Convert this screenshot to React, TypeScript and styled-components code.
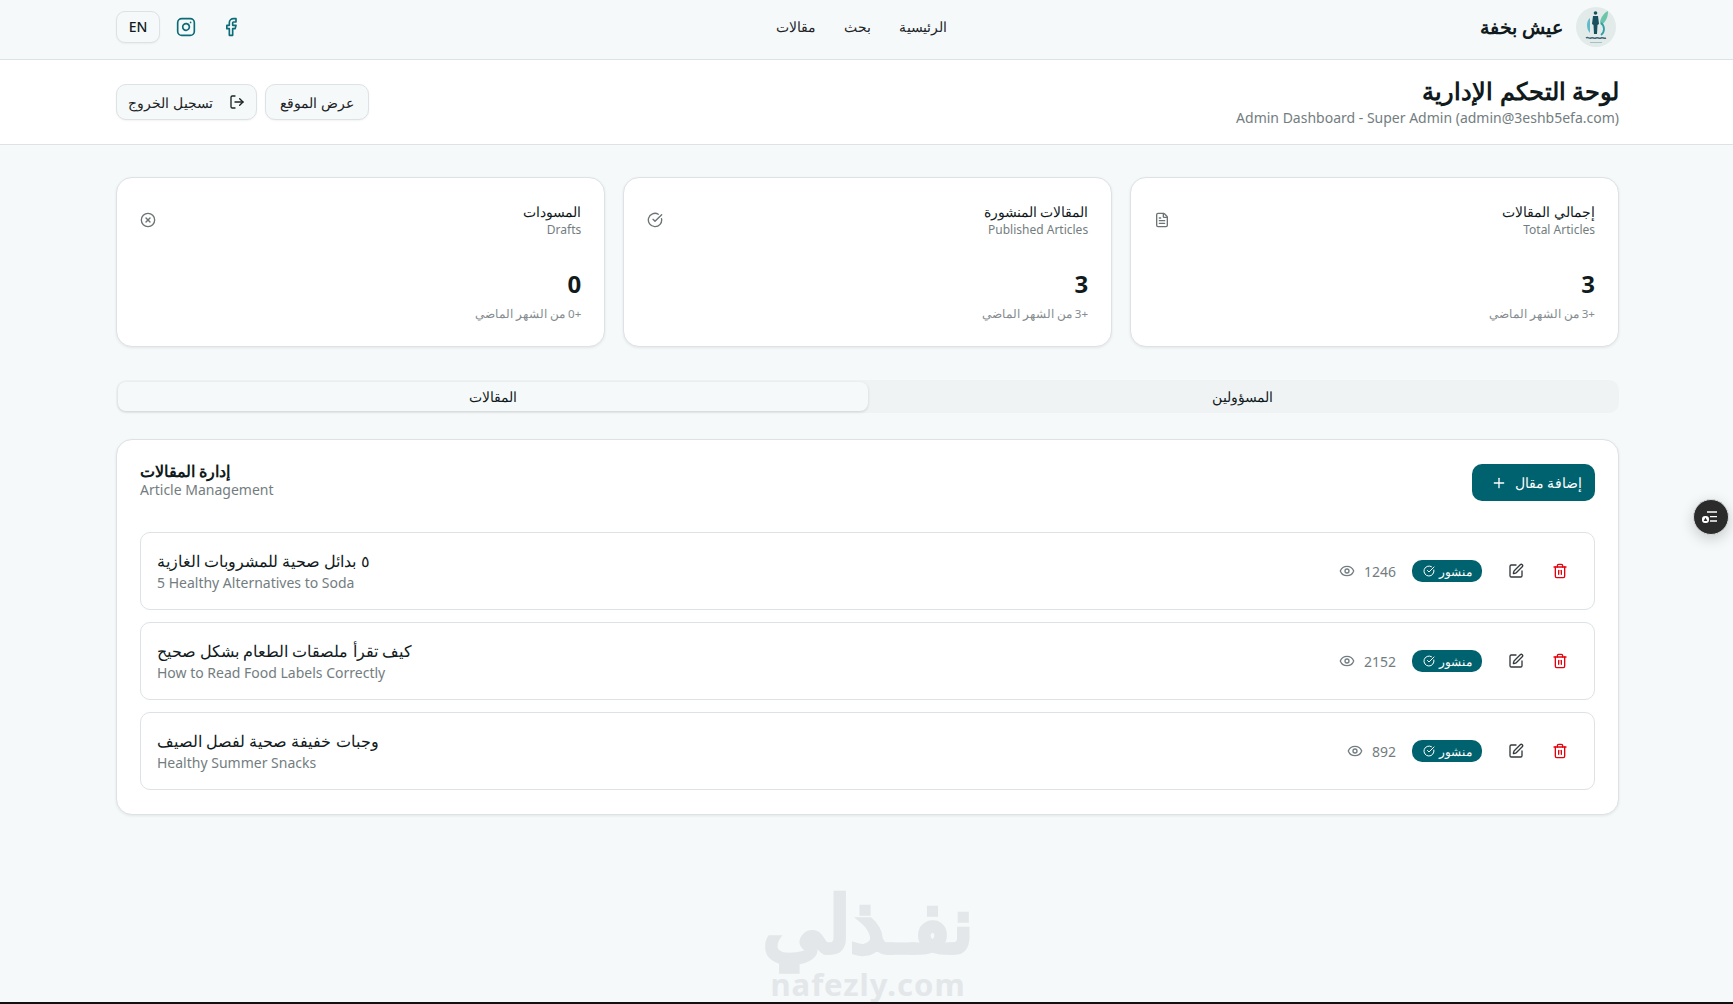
import React from 'react'
import styled, { createGlobalStyle } from 'styled-components'
import { CircleCheckBig, CircleX, Eye, Facebook, FileText, Instagram, LogOut, Plus, SquarePen, Trash2 } from 'lucide-react'

const teal = '#00626e'
const muted = '#737d80'
const ink = '#111a1c'
const line = '#dde2e5'
const pageBg = '#f5f9fa'

const GlobalStyle = createGlobalStyle`
    html, body {
        margin: 0;
        padding: 0;
        height: 1004px;
        overflow: hidden;
        background: ${pageBg};
        color: ${ink};
        font-family: "Noto Sans", sans-serif;
    }
    * { box-sizing: border-box; }
`

const stats = [
    { title: 'إجمالي المقالات', sub: 'Total Articles', value: '3', delta: '+3 من الشهر الماضي', Icon: FileText },
    { title: 'المقالات المنشورة', sub: 'Published Articles', value: '3', delta: '+3 من الشهر الماضي', Icon: CircleCheckBig },
    { title: 'المسودات', sub: 'Drafts', value: '0', delta: '+0 من الشهر الماضي', Icon: CircleX },
]

const articles = [
    { title: '٥ بدائل صحية للمشروبات الغازية', sub: '5 Healthy Alternatives to Soda', views: 1246 },
    { title: 'كيف تقرأ ملصقات الطعام بشكل صحيح', sub: 'How to Read Food Labels Correctly', views: 2152 },
    { title: 'وجبات خفيفة صحية لفصل الصيف', sub: 'Healthy Summer Snacks', views: 892 },
]

const App = () => {
    return (
        <Page dir="rtl">
            <GlobalStyle />
            <NavBar>
                <NavInner>
                    <Brand>
                        <LogoBadge>
                            <svg width="40" height="40" viewBox="0 0 40 40" fill="none">
                                <path d="M24 15c1-5 4-9 8-11 0 6-2 11-7 14z" fill="#6cc4ab" />
                                <path d="M14 11c-4 3-4 11 0 15z" fill="#5dbcc8" />
                                <path d="M25 16c4 3 4 9 0 12" stroke="#2f9ea6" strokeWidth="1.8" />
                                <circle cx="19.5" cy="6" r="1.8" fill="#17505e" />
                                <path d="M17 9h5l1 8-1.500 1-.5 9h-3l-.5-9L16 17z" fill="#17505e" />
                                <path d="M10 31c2-1.500 3 1 5 0s3 1 5 0 3 1 5 0 3 1 5 0" stroke="#3d6670" strokeWidth="1.500" />
                                <path d="M14 35.500h12" stroke="#a9c0c2" strokeWidth="1" />
                            </svg>
                        </LogoBadge>
                        <BrandName>عيش بخفة</BrandName>
                    </Brand>
                    <NavLinks>
                        <NavLink>الرئيسية</NavLink>
                        <NavLink>بحث</NavLink>
                        <NavLink>مقالات</NavLink>
                    </NavLinks>
                    <NavTools>
                        <SocialLink><Facebook size={20} /></SocialLink>
                        <SocialLink><Instagram size={20} /></SocialLink>
                        <LangButton>EN</LangButton>
                    </NavTools>
                </NavInner>
            </NavBar>

            <DashHeader>
                <DashInner>
                    <div>
                        <DashTitle>لوحة التحكم الإدارية</DashTitle>
                        <DashSub dir="ltr">Admin Dashboard - Super Admin (admin@3eshb5efa.com)</DashSub>
                    </div>
                    <DashActions>
                        <SiteButton>عرض الموقع</SiteButton>
                        <LogoutButton><LogOut size={16} />تسجيل الخروج</LogoutButton>
                    </DashActions>
                </DashInner>
            </DashHeader>

            <Main>
                <StatGrid>
                    {stats.map(({ title, sub, value, delta, Icon }) => (
                        <StatCard key={sub}>
                            <StatTop>
                                <div>
                                    <StatTitle>{title}</StatTitle>
                                    <StatSub>{sub}</StatSub>
                                </div>
                                <Icon size={16} color="#6b7375" />
                            </StatTop>
                            <StatValue>{value}</StatValue>
                            <StatDelta>{delta}</StatDelta>
                        </StatCard>
                    ))}
                </StatGrid>

                <Tabs>
                    <Tab>المسؤولين</Tab>
                    <Tab $active>المقالات</Tab>
                </Tabs>

                <Panel>
                    <PanelHead>
                        <PanelHeading>
                            <PanelTitle>إدارة المقالات</PanelTitle>
                            <PanelSub>Article Management</PanelSub>
                        </PanelHeading>
                        <AddButton>إضافة مقال<Plus size={16} /></AddButton>
                    </PanelHead>
                    <ArticleList>
                        {articles.map(item => (
                            <ArticleRow key={item.sub}>
                                <ArticleText>
                                    <ArticleTitle>{item.title}</ArticleTitle>
                                    <ArticleSub dir="ltr">{item.sub}</ArticleSub>
                                </ArticleText>
                                <ArticleMeta>
                                    <Views dir="ltr"><Eye size={16} />{item.views}</Views>
                                    <StatusBadge>منشور<CircleCheckBig size={12} /></StatusBadge>
                                    <EditButton><SquarePen size={16} /></EditButton>
                                    <DeleteButton><Trash2 size={16} /></DeleteButton>
                                </ArticleMeta>
                            </ArticleRow>
                        ))}
                    </ArticleList>
                </Panel>
            </Main>

            <FloatButton>
                <svg width="34" height="34" viewBox="0 0 34 34" fill="none" stroke="#fff" strokeWidth="1.300">
                    <path d="M13 12h10M16 16.700h7M16 21h7" />
                    <rect x="8" y="16" width="7" height="7" rx="3" fill="#fff" stroke="none" />
                    <path d="M11.500 17.500l1.800 3.500h-3.600z" fill="#2b2b2b" stroke="none" />
                </svg>
            </FloatButton>

            <Watermark dir="rtl">
                <WatermarkName>نفـذلي</WatermarkName>
                <WatermarkUrl dir="ltr">nafezly.com</WatermarkUrl>
            </Watermark>
            <BottomEdge />
        </Page>
    )
}

const Page = styled.div`
    position: relative;
    height: 1004px;
    overflow: hidden;
`

const NavBar = styled.header`
    height: 60px;
    border-bottom: 1px solid ${line};
    background: ${pageBg};
`

const NavInner = styled.div`
    height: 100%;
    padding: 0 114px 6px 116px;
    display: flex;
    align-items: center;
    justify-content: space-between;
`

const Brand = styled.div`
    display: flex;
    align-items: center;
    gap: 13px;
    width: 346px;
`

const LogoBadge = styled.div`
    width: 40px;
    height: 40px;
    margin-right: 3px;
    border-radius: 50%;
    background: #e2eaea;
    display: flex;
    align-items: center;
    justify-content: center;
`

const BrandName = styled.span`
    font-size: 18.700px;
    font-weight: 700;
`

const NavLinks = styled.nav`
    display: flex;
    gap: 28px;
`

const NavLink = styled.a`
    font-size: 14.400px;
    font-weight: 500;
    color: #1d2527;
`

const NavTools = styled.div`
    width: 334px;
    display: flex;
    align-items: center;
    justify-content: flex-end;
    gap: 16px;
`

const SocialLink = styled.a`
    display: flex;
    color: #0b6c78;
    &:first-child {
        margin-left: 9px;
    }
`

const LangButton = styled.button`
    width: 44px;
    height: 32px;
    font: 500 14px "Noto Sans", sans-serif;
    color: ${ink};
    background: ${pageBg};
    border: 1px solid ${line};
    border-radius: 9px;
    box-shadow: 0 1px 2px rgba(0, 0, 0, .05);
`

const DashHeader = styled.section`
    height: 85px;
    background: #fff;
    border-bottom: 1px solid ${line};
`

const DashInner = styled.div`
    height: 100%;
    padding: 0 114px 0 116px;
    display: flex;
    align-items: center;
    justify-content: space-between;
`

const DashTitle = styled.h1`
    margin: -5px 0 0;
    font-size: 24.200px;
    line-height: 36px;
    font-weight: 700;
`

const DashSub = styled.p`
    margin: 0;
    font-size: 14px;
    line-height: 18px;
    color: ${muted};
`

const DashActions = styled.div`
    display: flex;
    gap: 8px;
`

const OutlineButton = styled.button`
    height: 36px;
    display: flex;
    align-items: center;
    font: 500 14px "Noto Sans", sans-serif;
    color: #1b2325;
    background: ${pageBg};
    border: 1px solid ${line};
    border-radius: 10px;
    box-shadow: 0 1px 2px rgba(0, 0, 0, .05);
`

const SiteButton = styled(OutlineButton)`
    padding: 0 14.500px;
`

const LogoutButton = styled(OutlineButton)`
    padding: 0 11px;
    gap: 16px;
`

const Main = styled.main`
    padding: 32px 114px 0 116px;
`

const StatGrid = styled.div`
    display: grid;
    grid-template-columns: repeat(3, 1fr);
    gap: 17.600px;
`

const StatCard = styled.div`
    height: 170px;
    padding: 24px 23px 0;
    background: #fff;
    border: 1px solid ${line};
    border-radius: 16px;
    box-shadow: 0 1px 3px rgba(0, 0, 0, .08);
`

const StatTop = styled.div`
    display: flex;
    align-items: center;
    justify-content: space-between;
`

const StatTitle = styled.div`
    font-size: 14px;
    line-height: 19px;
    font-weight: 500;
`

const StatSub = styled.div`
    margin-top: 1px;
    font-size: 12px;
    line-height: 16px;
    color: ${muted};
`

const StatValue = styled.div`
    margin-top: 30px;
    font-size: 24px;
    line-height: 32px;
    font-weight: 700;
`

const StatDelta = styled.div`
    margin-top: 5px;
    font-size: 11.600px;
    line-height: 18px;
    color: #858d90;
`

const Tabs = styled.div`
    margin-top: 33px;
    height: 33px;
    padding: 2px;
    display: grid;
    grid-template-columns: 1fr 1fr;
    background: #eff3f4;
    border-radius: 10px;
`

const Tab = styled.button<{ $active?: boolean }>`
    font: 500 14px "Noto Sans", sans-serif;
    color: ${ink};
    border: 0;
    border-radius: 8px;
    background: ${props => props.$active ? pageBg : 'transparent'};
    box-shadow: ${props => props.$active ? '0 1px 3px rgba(0, 0, 0, .14)' : 'none'};
`

const Panel = styled.section`
    margin-top: 26px;
    height: 376px;
    padding: 24px 23px 23px;
    background: #fff;
    border: 1px solid ${line};
    border-radius: 16px;
    box-shadow: 0 1px 3px rgba(0, 0, 0, .08);
`

const PanelHead = styled.div`
    height: 37px;
    display: flex;
    flex-direction: row-reverse;
    align-items: flex-start;
    justify-content: space-between;
`

const PanelHeading = styled.div`
    margin-top: -2px;
    display: flex;
    flex-direction: column;
    align-items: flex-end;
`

const PanelTitle = styled.div`
    font-size: 16px;
    line-height: 18px;
    font-weight: 600;
`

const PanelSub = styled.div`
    margin-top: 1px;
    font-size: 14px;
    line-height: 18px;
    color: ${muted};
`

const AddButton = styled.button`
    width: 123px;
    height: 37px;
    padding: 0 0 0 6px;
    display: flex;
    align-items: center;
    justify-content: center;
    gap: 8px;
    font: 500 14px "Noto Sans", sans-serif;
    color: #fff;
    background: ${teal};
    border: 0;
    border-radius: 10px;
`

const ArticleList = styled.div`
    margin-top: 31px;
    display: flex;
    flex-direction: column;
    gap: 12px;
`

const ArticleRow = styled.div`
    height: 78px;
    padding: 0 16px;
    display: flex;
    flex-direction: row-reverse;
    align-items: center;
    justify-content: space-between;
    border: 1px solid ${line};
    border-radius: 10px;
`

const ArticleText = styled.div`
    display: flex;
    flex-direction: column;
    align-items: flex-end;
`

const ArticleTitle = styled.div`
    font-size: 16px;
    line-height: 24px;
    font-weight: 500;
`

const ArticleSub = styled.div`
    font-size: 14px;
    line-height: 20px;
    color: ${muted};
`

const ArticleMeta = styled.div`
    display: flex;
    flex-direction: row-reverse;
    align-items: center;
`

const Views = styled.div`
    display: flex;
    align-items: center;
    gap: 9px;
    font-size: 14px;
    color: ${muted};
`

const StatusBadge = styled.div`
    height: 22px;
    width: 70px;
    margin-left: 16px;
    display: flex;
    align-items: center;
    justify-content: center;
    gap: 4px;
    font-size: 12px;
    color: #fff;
    background: ${teal};
    border-radius: 10px;
`

const IconButton = styled.button`
    width: 36px;
    height: 32px;
    padding: 0;
    display: flex;
    align-items: center;
    justify-content: center;
    background: transparent;
    border: 0;
`

const EditButton = styled(IconButton)`
    margin-left: 16px;
    color: #333a3c;
`

const DeleteButton = styled(IconButton)`
    margin-left: 8px;
    color: #e7000b;
`

const FloatButton = styled.div`
    position: absolute;
    top: 499px;
    right: 4px;
    width: 36px;
    height: 36px;
    display: flex;
    align-items: center;
    justify-content: center;
    background: #2b2b2b;
    border: 1px solid #d8dcdd;
    border-radius: 50%;
    box-shadow: 0 4px 14px rgba(0, 0, 0, .18);
`

const Watermark = styled.div`
    position: absolute;
    left: 743px;
    top: 880px;
    width: 250px;
    display: flex;
    flex-direction: column;
    align-items: center;
    color: #e3e7e9;
    pointer-events: none;
`

const WatermarkName = styled.div`
    height: 86px;
    font-size: 77px;
    line-height: 86px;
    font-weight: 800;
    white-space: nowrap;
    -webkit-text-stroke: 3px #e3e7e9;
`

const WatermarkUrl = styled.div`
    margin-top: 3px;
    font-size: 31px;
    line-height: 30px;
    font-weight: 700;
    letter-spacing: 1px;
`

const BottomEdge = styled.div`
    position: absolute;
    left: 0;
    right: 0;
    bottom: 0;
    height: 2px;
    background: #111;
`

export default App
